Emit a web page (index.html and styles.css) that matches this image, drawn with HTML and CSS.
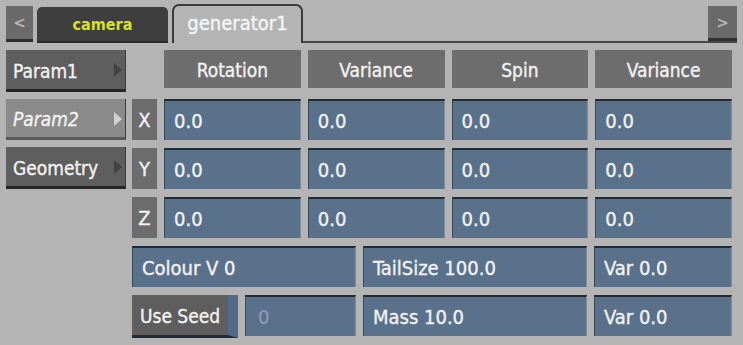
FILE: index.html
```html
<!DOCTYPE html>
<html lang="en">
<head>
    <meta charset="UTF-8">
    <meta name="viewport" content="width=device-width, initial-scale=1.0">
    <title>generator1</title>
    <link rel="stylesheet" href="styles.css">
</head>
<body>
    <header class="tabs">
        <button class="arrow">&lt;</button>
        <span class="tab camera">camera</span>
        <span class="tab active">generator1</span>
        <span class="tabline"></span>
        <button class="arrow right">&gt;</button>
    </header>
    <main class="panel">
        <aside class="menu">
            <button class="btn">Param1<i></i></button>
            <button class="btn sel">Param2<i></i></button>
            <button class="btn">Geometry<i></i></button>
        </aside>
        <section class="grid">
            <div class="row">
                <span class="axis blank"></span>
                <span class="head">Rotation</span>
                <span class="head">Variance</span>
                <span class="head">Spin</span>
                <span class="head">Variance</span>
            </div>
            <div class="row">
                <span class="axis">X</span>
                <span class="field">0.0</span>
                <span class="field">0.0</span>
                <span class="field">0.0</span>
                <span class="field">0.0</span>
            </div>
            <div class="row">
                <span class="axis">Y</span>
                <span class="field">0.0</span>
                <span class="field">0.0</span>
                <span class="field">0.0</span>
                <span class="field">0.0</span>
            </div>
            <div class="row">
                <span class="axis">Z</span>
                <span class="field">0.0</span>
                <span class="field">0.0</span>
                <span class="field">0.0</span>
                <span class="field">0.0</span>
            </div>
            <div class="row wide">
                <span class="field w2">Colour V 0</span>
                <span class="field w2">TailSize 100.0</span>
                <span class="field w1">Var 0.0</span>
            </div>
            <div class="row wide">
                <div class="w2 pair">
                    <button class="seed">Use Seed</button>
                    <span class="field dim">0</span>
                </div>
                <span class="field w2">Mass 10.0</span>
                <span class="field w1">Var 0.0</span>
            </div>
        </section>
    </main>
</body>
</html>
```
FILE: styles.css
```css
* {box-sizing:border-box;}
body {
    margin:0; width:743px; height:345px;
    background:#b4b4b4; overflow:hidden;
    font-family:"DejaVu Sans Condensed", "DejaVu Sans", sans-serif;
    font-stretch:condensed;
    font-size:19px; color:#f2f2f2;
    -webkit-text-stroke:0.35px;
}
button {font:inherit; color:inherit; border:0; padding:0; margin:0;}

/* tab bar */
.tabs {
    display:flex; align-items:flex-end;
    height:43px; padding:0 6px 0 6px;
}
.arrow {
    width:27px; height:36px; margin-bottom:1px;
    background:#6a6a6a; color:#b8b8b8;
    border-bottom:3px solid #2e2e2e;
    font-size:16px;
}
.tab {
    display:flex; align-items:center; justify-content:center;
    height:36px; width:131px; margin-left:4px;
    border-radius:5px 5px 0 0;
}
.camera {
    background:#3e3e3e; color:#d8e41e;
    font-size:16px; font-weight:bold;
    -webkit-text-stroke:0;
    border-bottom:2px solid #2a2a2a;
}
.active {
    height:39px; background:#b4b4b4;
    border:2px solid #3a3a3a; border-bottom:0;
    border-radius:7px 7px 0 0;
    color:#f4f4f4; font-size:20px;
    padding-bottom:3px;
}
.tabline {
    flex:1; align-self:flex-end;
    height:2px; background:#474747;
}
.arrow.right {
    position:absolute; left:708px; top:6px;
    width:29px; height:35px;
}

/* panel */
.panel {
    display:flex; gap:6px;
    padding:7px 0 0 6px;
}
.menu {
    width:120px;
    display:flex; flex-direction:column; gap:7px;
}
.btn {
    position:relative;
    height:42px; text-align:left;
    padding:2px 0 0 7px;
    background:#5e5e5e;
    border-bottom:3px solid #262626;
    border-right:1px solid #3c3c3c;
}
.btn i {
    position:absolute; right:3px; top:13px;
    border-left:8px solid #434343;
    border-top:7px solid transparent;
    border-bottom:7px solid transparent;
}
.sel {
    background:#8a8a8a; font-style:italic;
    border-bottom:3px solid #5a5a5a;
    height:41px;
}
.sel i {border-left-color:#d0d0d0;}

.grid {
    display:flex; flex-direction:column; gap:8px;
    width:600px;
}
.row {
    display:flex; gap:7px; height:41px;
}
.axis {
    width:25px; flex:none;
    display:flex; align-items:center; justify-content:center;
    background:#6c6c6c; font-size:20px;
}
.axis.blank {background:none;}
.head {
    flex:1;
    display:flex; align-items:center; justify-content:center;
    background:#6d6d6d;
    height:38px; padding-top:2px;
}
.field {
    flex:1; min-width:0;
    display:flex; align-items:center;
    padding:0 8px 0 9px;
    background:#5a718b;
    border-top:2px solid #222a33;
    border-left:1px solid #3b4756;
    border-right:1px solid #7d8c9c;
    font-size:20px;
    white-space:nowrap;
}
.wide .w2 {flex:0 0 224px;}
.wide .w1 {flex:1;}
.pair {display:flex; gap:7px;}
.seed {
    width:106px; height:43px; flex:none;
    text-align:left; padding:2px 0 0 8px;
    background:#5e5e5e;
    border-right:10px solid #52698a;
    border-bottom:3px solid #232a3a;
}
.dim {color:#8f9fb1; padding-left:12px; -webkit-text-stroke:0;}
```
